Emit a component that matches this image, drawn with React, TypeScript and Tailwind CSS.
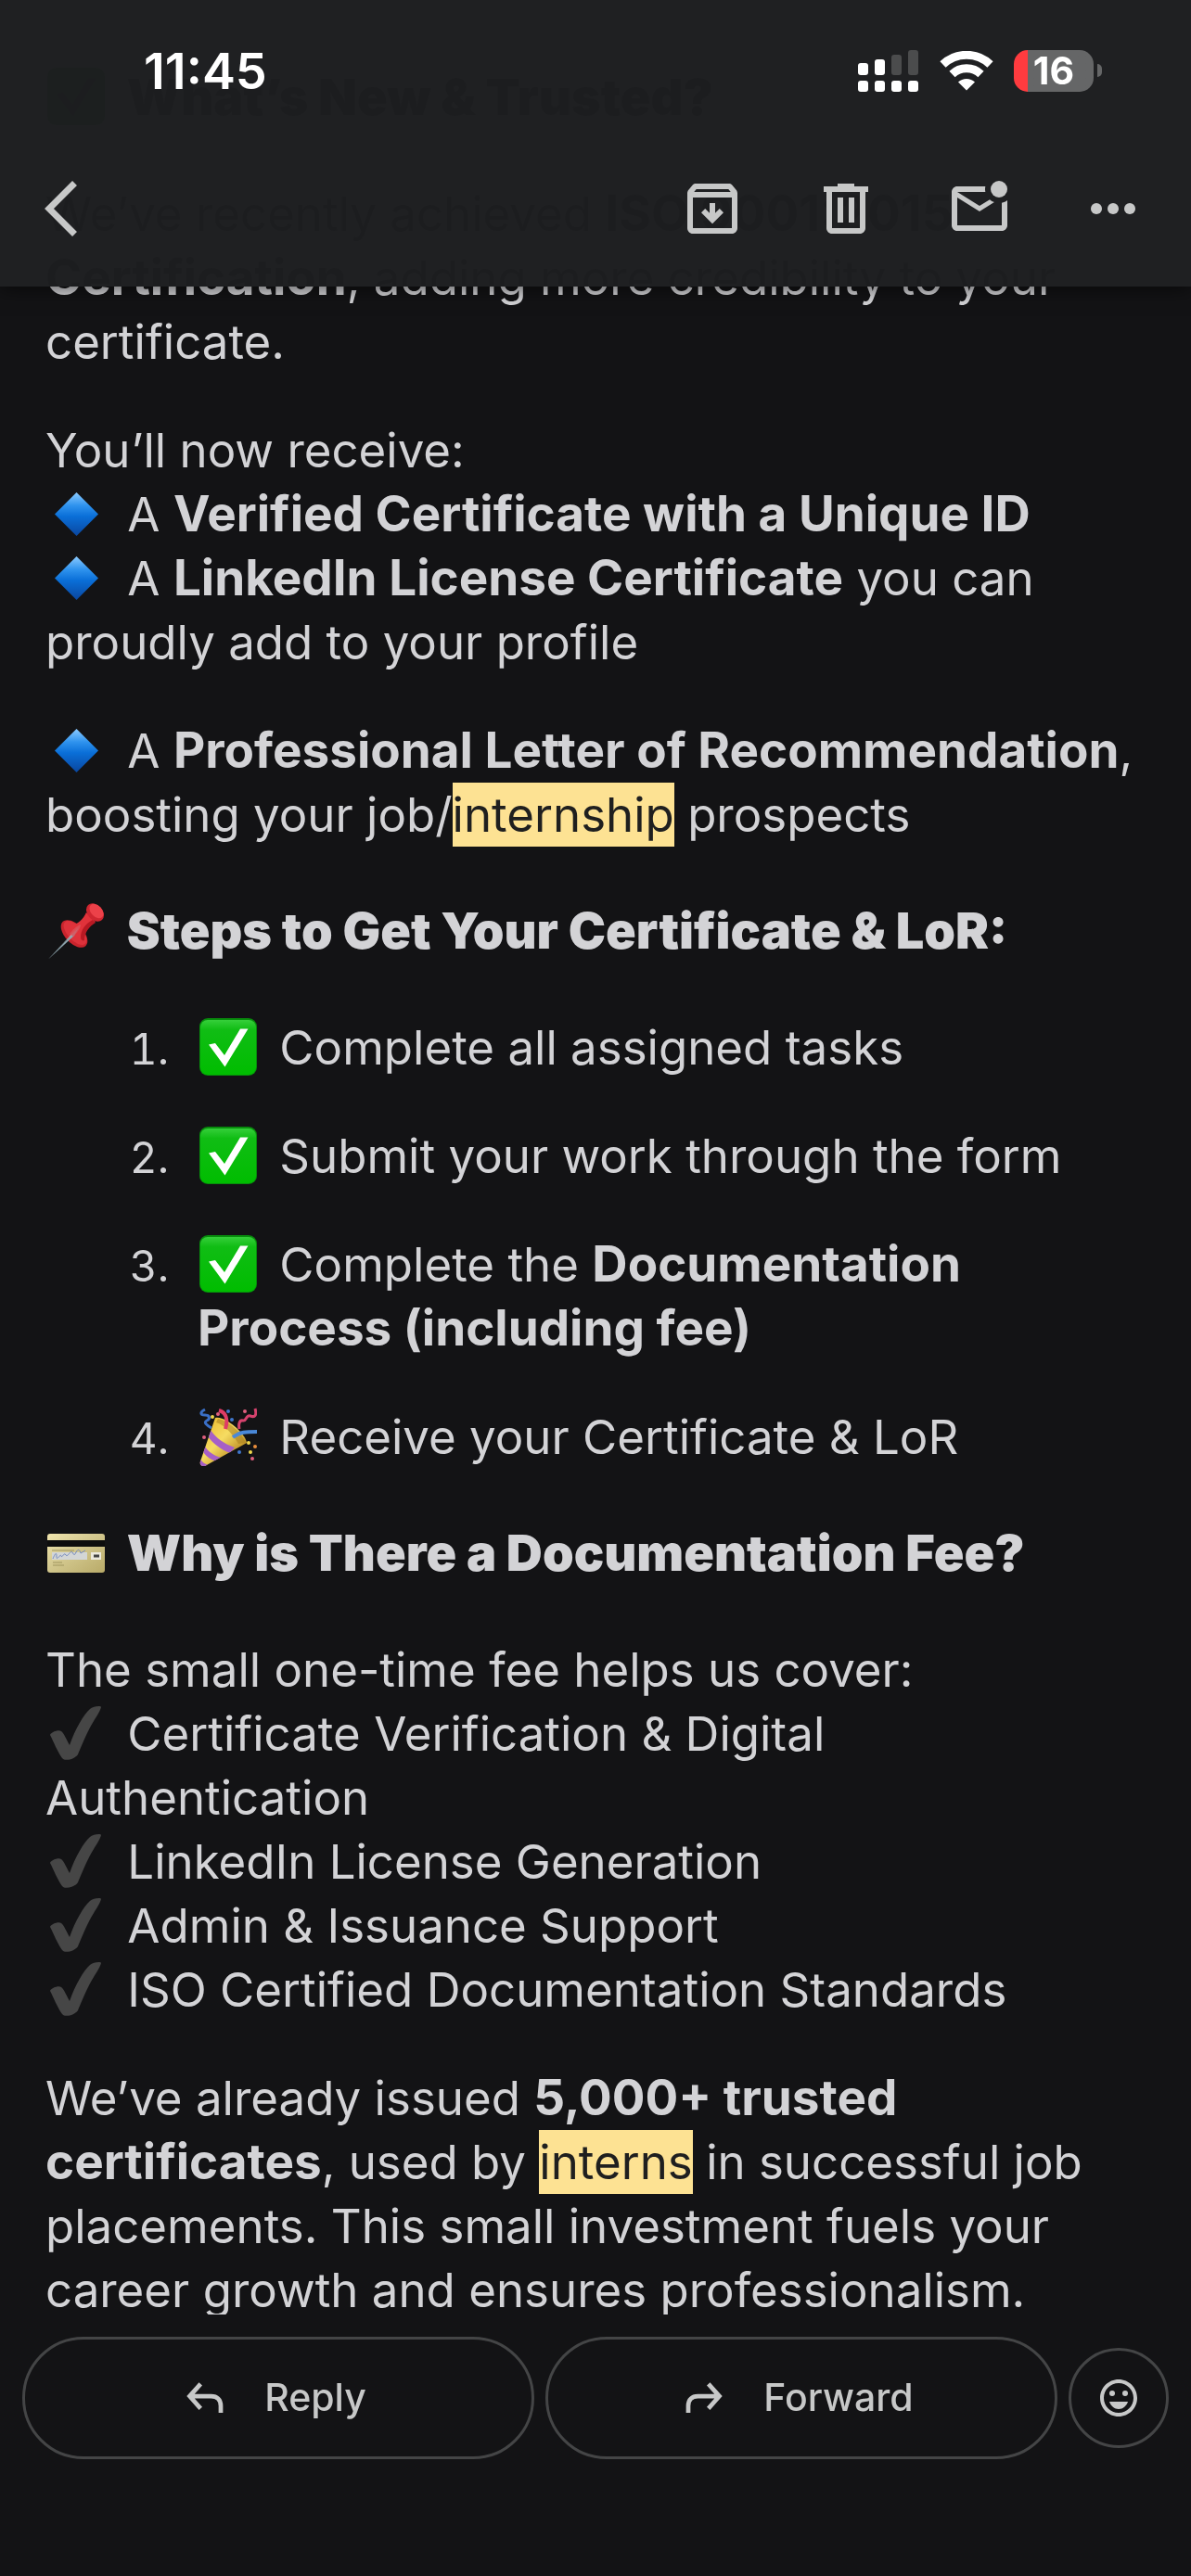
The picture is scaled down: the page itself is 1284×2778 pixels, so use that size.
import type { ReactNode } from "react";
import { MdOutlineEmojiEmotions } from "react-icons/md";

const emojiClass = "inline-block size-[64px] shrink-0 -mt-[10px] mr-[10px] align-middle";

function Diamond() {
  return (
    <svg viewBox="0 0 64 64" className={emojiClass} role="img" aria-label="Blue diamond">
      <defs>
        <linearGradient id="diamond" x1="0" y1="0" x2="0" y2="1">
          <stop offset="0" stopColor="#8ccbff" />
          <stop offset="0.3" stopColor="#2f93ee" />
          <stop offset="0.55" stopColor="#0a6fd8" />
          <stop offset="1" stopColor="#0a469f" />
        </linearGradient>
      </defs>
      <path d="M33.5 9 57 32.500 33.500 56 10 32.500Z" fill="url(#diamond)" />
    </svg>
  );
}

function CheckBox() {
  return (
    <svg viewBox="0 0 64 64" className={emojiClass} role="img" aria-label="Check mark">
      <defs>
        <linearGradient id="box" x1="0" y1="0" x2="0" y2="1">
          <stop offset="0" stopColor="#35cf3a" />
          <stop offset="0.18" stopColor="#10bd14" />
          <stop offset="1" stopColor="#00bd00" />
        </linearGradient>
      </defs>
      <rect x="2" y="1" width="62" height="62" rx="9" fill="#078d0c" />
      <rect x="3" y="3" width="60" height="59" rx="8" fill="url(#box)" />
      <path d="M12 29.500 19 28 29 41 46 12.500H54.500L29.500 53.500Z" fill="#fff" />
    </svg>
  );
}

function Pushpin() {
  return (
    <svg viewBox="0 0 64 64" className={emojiClass} role="img" aria-label="Pushpin">
      <ellipse cx="31" cy="36" rx="18" ry="10" transform="rotate(47 31 36)" fill="#c9242d" />
      <ellipse cx="32" cy="35" rx="16" ry="8" transform="rotate(47 32 35)" fill="#dd323b" />
      <path d="M27 27c8-1 14-7 17-14l10 10c-7 4-12 11-12 19-3 4-18-9-15-15Z" fill="#e0323a" />
      <path d="M38 40c0-8 5-15 13-19l3 3c-7 4-12 11-12 19-1 1-4 0-4-3Z" fill="#b81923" />
      <ellipse cx="53.500" cy="13" rx="11" ry="8" transform="rotate(47 53.500 13)" fill="#cf2630" />
      <ellipse cx="55" cy="11.500" rx="9" ry="6" transform="rotate(47 55 11.500)" fill="#ec4149" />
      <path d="M36 29 3 63.500 31 38Z" fill="#8fa9b3" />
      <path d="M35 29 3 63.500 29 36Z" fill="#d6dfe3" />
      <path d="M38 26c-4 1-9 6-12 10l4 3c4-4 8-9 8-13Z" fill="#d9525a" opacity="0.800" />
    </svg>
  );
}

function PartyPopper() {
  return (
    <svg viewBox="0 0 64 64" className={emojiClass} role="img" aria-label="Party popper">
      <defs>
        <linearGradient id="cone" x1="0.200" y1="0.300" x2="0.700" y2="0.800">
          <stop offset="0" stopColor="#eec23a" />
          <stop offset="0.450" stopColor="#f6dc62" />
          <stop offset="1" stopColor="#b98a20" />
        </linearGradient>
        <clipPath id="cone-shape">
          <path d="M19 12c10-3 33 17 34 27L8 64c-4 1-6-2-5-5Z" />
        </clipPath>
      </defs>
      <g clipPath="url(#cone-shape)">
        <rect width="64" height="64" fill="url(#cone)" />
        <path d="M22 13c11 2 25 14 30 26l-8 1C38 30 30 20 20 17Z" fill="#a9801f" opacity="0.550" />
        <path d="M14 25c5 8 14 15 26 19l-5 6C25 46 17 40 11 32Z" fill="#a65fc6" />
        <path d="M8 43c4 6 10 10 18 12l-6 4c-6-2-10-5-14-10Z" fill="#a65fc6" />
        <path d="M3 56c2 4 5 6 9 7l-5 4-7-5Z" fill="#a65fc6" />
      </g>
      <path d="M23 4c8 2 10 10 7 20" fill="none" stroke="#df3c66" strokeWidth="4" />
      <path d="M38 33c8-6 14-6 26-6" fill="none" stroke="#4a88d8" strokeWidth="4" />
      <path d="M8 3C2 6 3 9 8 9s6 4 2 6 0 5 5 8" fill="none" stroke="#3a6fc6" strokeWidth="3" />
      <path d="M62 2c2 7 0 10-5 8s-4 6-8 5-5 4-4 9" fill="none" stroke="#d5426d" strokeWidth="3" />
      <g fill="#f0d84c">
        <circle cx="16" cy="11" r="2" />
        <circle cx="55" cy="39" r="2" />
        <circle cx="57" cy="49" r="2" />
        <circle cx="62" cy="43" r="2" fill="#e88d3c" />
      </g>
      <g fill="#3f76cc">
        <circle cx="33" cy="5" r="2" />
        <circle cx="37" cy="14" r="2" />
        <circle cx="45" cy="49" r="2" />
      </g>
      <g fill="#e0607f">
        <circle cx="22" cy="8" r="2" />
        <circle cx="51" cy="5" r="2" />
        <circle cx="7" cy="33" r="2" />
        <circle cx="59" cy="56" r="2" />
      </g>
    </svg>
  );
}

function CreditCard() {
  return (
    <svg viewBox="0 0 64 64" className={emojiClass} role="img" aria-label="Credit card">
      <defs>
        <linearGradient id="card" x1="0" y1="0" x2="1" y2="1">
          <stop offset="0" stopColor="#f1e6ae" />
          <stop offset="0.4" stopColor="#d6cb92" />
          <stop offset="1" stopColor="#b8aa68" />
        </linearGradient>
      </defs>
      <rect x="2" y="12" width="62" height="42" rx="3" fill="url(#card)" />
      <rect x="2" y="19" width="62" height="7" fill="#0d0d0d" />
      <rect x="7" y="32" width="38" height="8" fill="#d3d6d6" />
      <path
        d="M8 39c3-7 4-7 4-2s4-4 5-1 3-5 5-1c2 3 5-6 7-3s2 4 4 0 4-3 5 1l5-3"
        fill="none"
        stroke="#7389bd"
        strokeWidth="1"
      />
      <rect x="49" y="32" width="11" height="8" fill="#ece9dc" />
      <path d="M52 36h6" stroke="#444" strokeWidth="3" />
      <path d="M7 30h24M8 43h10M8 46h12" stroke="#a0955f" strokeWidth="1" />
    </svg>
  );
}

function HeavyCheck() {
  return (
    <svg viewBox="0 0 64 64" className={emojiClass} role="img" aria-label="Check">
      <path
        d="M5 34c1-3 9-6 12-4 3 2 6 10 9 15C32 28 41 12 48 6c3-3 12-4 12-2-1 5-8 14-13 24-6 12-9 20-12 27-3 5-14 8-17 4C13 52 9 42 5 34Z"
        fill="#464646"
      />
    </svg>
  );
}

function Mark({ children }: { children: ReactNode }) {
  return <mark className="bg-[#fde293] py-[4px] text-[#1f1f1f]">{children}</mark>;
}

function Strong({ children }: { children: ReactNode }) {
  return <strong className="text-[53px] font-bold">{children}</strong>;
}

function Heading({ children }: { children: ReactNode }) {
  return <h2 className="my-[56px] text-[54px] leading-[70px] font-black [&>svg]:mr-[13px]">{children}</h2>;
}

function Step({ n, children }: { n: number; children: ReactNode }) {
  return (
    <li className="flex items-baseline">
      <span className="w-[133px] shrink-0 text-right text-[46px] leading-[60px] tabular-nums">{n}.</span>
      <div className="ml-[31px]">{children}</div>
    </li>
  );
}

function StatusBar() {
  return (
    <div className="flex h-[152px] items-center justify-between pr-[96px] pl-[155px] text-white">
      <time className="text-[54px] font-semibold">11:45</time>
      <div className="flex items-center gap-[22px]">
        <svg viewBox="0 0 66 45" className="h-[45px] w-[66px]" fill="#fff" aria-label="Signal">
          <rect x="0" y="14" width="11" height="13" rx="3" />
          <rect x="18" y="10" width="11" height="17" rx="3" />
          <rect x="36" y="5" width="11" height="22" rx="3" fill="#4b4c4d" />
          <rect x="54" y="0" width="11" height="27" rx="3" fill="#4b4c4d" />
          <rect x="0" y="33" width="11" height="12" rx="3" />
          <rect x="18" y="33" width="11" height="12" rx="3" />
          <rect x="36" y="33" width="11" height="12" rx="3" />
          <rect x="54" y="33" width="11" height="12" rx="3" />
        </svg>
        <svg viewBox="0 0 58 43" className="h-[43px] w-[58px]" fill="none" stroke="#fff" aria-label="Wi-Fi">
          <path d="M3.500 14.500a37 37 0 0 1 51 0" strokeWidth="9" />
          <path d="M13.500 25a22.500 22.500 0 0 1 31 0" strokeWidth="9" />
          <path d="M20 33.500a13 13 0 0 1 18 0L29 42.500Z" fill="#fff" stroke="none" />
        </svg>
        <div className="flex items-center gap-[4px]">
          <div className="flex h-[45px] w-[86px] items-center justify-center overflow-hidden rounded-[15px] bg-linear-to-r from-[#ff3b3f] from-18% to-[#656667] to-18% text-[41px] leading-[45px] font-bold">
            16
          </div>
          <div className="h-[14px] w-[5px] rounded-r-full bg-[#656667]" />
        </div>
      </div>
    </div>
  );
}

function Tool({ label, children }: { label: string; children: ReactNode }) {
  return (
    <button type="button" aria-label={label} className="size-[72px]">
      <svg viewBox="0 0 24 24" className="size-full" fill="currentColor">
        {children}
      </svg>
    </button>
  );
}

function TopBar() {
  return (
    <header className="fixed inset-x-0 top-0 z-10 h-[309px] bg-[#1c1d1f]/99 text-[#c7c8c8] shadow-[0_2px_20px_rgba(0,0,0,0.6)] backdrop-hue-rotate-180 backdrop-invert">
      <StatusBar />
      <div className="flex h-[146px] items-center justify-between px-[48px]">
        <button type="button" aria-label="Back" className="flex size-[72px] items-center">
          <svg viewBox="0 0 36 60" className="h-[60px] w-[36px]" fill="none" stroke="currentColor" strokeWidth="7">
            <path d="M32.500 2.500 5 30l27.500 27.500" />
          </svg>
        </button>
        <div className="flex gap-[72px]">
          <Tool label="Archive">
            <path d="M20.540 5.230l-1.390-1.680C18.880 3.210 18.470 3 18 3H6c-.47 0-.88.21-1.160.55L3.460 5.230C3.170 5.570 3 6.020 3 6.500V19c0 1.100.9 2 2 2h14c1.100 0 2-.9 2-2V6.500c0-.48-.17-.93-.46-1.270zM6.240 5h11.520l.83 1H5.420l.82-1zM5 19V8h14v11H5z" />
            <path d="m12 17.400 4-4-1.400-1.400-1.600 1.600V10h-2v3.600L9.400 12 8 13.400Z" />
          </Tool>
          <Tool label="Delete">
            <path
              fillRule="evenodd"
              d="M7 21c-1.100 0-2-.9-2-2V6H4V4h5V3h6v1h5v2h-1v13c0 1.100-.9 2-2 2ZM17 6H7v13h10ZM9 17h2V8H9Zm4 0h2V8h-2Z"
            />
          </Tool>
          <Tool label="Mark as unread">
            <path d="M22 8.980V18c0 1.100-.9 2-2 2H4c-1.100 0-2-.9-2-2V6c0-1.100.9-2 2-2h10.100c-.06.32-.1.66-.1 1 0 .34.04.68.1 1H4l8 5 3.670-2.290c.47.43 1.020.76 1.630.98L12 13 4 8v10h16V9.900c.74-.15 1.420-.48 2-.92z" />
            <circle cx="19" cy="5" r="3" />
          </Tool>
          <Tool label="More options">
            <circle cx="6" cy="12" r="2" />
            <circle cx="12" cy="12" r="2" />
            <circle cx="18" cy="12" r="2" />
          </Tool>
        </div>
      </div>
    </header>
  );
}

function Message() {
  return (
    <main className="min-h-0 flex-1 overflow-hidden pt-[14px] pr-[48px] pl-[49px] text-[51px] leading-[69px] text-[#d3d3d6]">
      <Heading>
        <CheckBox /> What’s New &amp; Trusted?
      </Heading>
      <p>
        We’ve recently achieved <Strong>ISO 9001:2015</Strong>
        <br />
        <Strong>Certification</Strong>, adding more credibility to your certificate.
      </p>
      <p className="mt-[48px]">
        You’ll now receive:
        <br />
        <Diamond /> A <Strong>Verified Certificate with a Unique ID</Strong>
        <br />
        <Diamond /> A <Strong>LinkedIn License Certificate</Strong> you can
        <br />
        proudly add to your profile
      </p>
      <p className="mt-[48px]">
        <Diamond /> A <Strong>Professional Letter of Recommendation</Strong>,
        <br />
        boosting your job/<Mark>internship</Mark> prospects
      </p>
      <Heading>
        <Pushpin /> Steps to Get Your Certificate &amp; LoR:
      </Heading>
      <ol className="flex flex-col gap-[48px]">
        <Step n={1}>
          <CheckBox /> Complete all assigned tasks
        </Step>
        <Step n={2}>
          <CheckBox /> Submit your work through the form
        </Step>
        <Step n={3}>
          <CheckBox /> Complete the <Strong>Documentation Process (including fee)</Strong>
        </Step>
        <Step n={4}>
          <PartyPopper /> Receive your Certificate &amp; LoR
        </Step>
      </ol>
      <Heading>
        <CreditCard /> Why is There a Documentation Fee?
      </Heading>
      <p>
        The small one-time fee helps us cover:
        <br />
        <HeavyCheck /> Certificate Verification &amp; Digital
        <br />
        Authentication
        <br />
        <HeavyCheck /> LinkedIn License Generation
        <br />
        <HeavyCheck /> Admin &amp; Issuance Support
        <br />
        <HeavyCheck /> ISO Certified Documentation Standards
      </p>
      <p className="mt-[48px]">
        We’ve already issued <Strong>5,000+ trusted certificates</Strong>, used by <Mark>interns</Mark> in successful job
        placements. This small investment fuels your career growth and ensures professionalism.
      </p>
    </main>
  );
}

function Actions() {
  const pill =
    "flex h-[132px] flex-1 items-center justify-center gap-[44px] rounded-full border-3 border-[#444546] pr-[4px] text-[41px] font-medium";
  return (
    <footer className="flex items-center gap-[12px] px-[24px] pt-[24px] pb-[126px] text-[#c7c8c8]">
      <button type="button" className={pill}>
        <svg viewBox="0 0 42 36" className="h-[34px] w-[40px]" fill="none" stroke="currentColor" strokeWidth="5">
          <path d="M16 2 3.500 16 16 30M4 16h24c7 0 11 4 11 11v8" />
        </svg>
        Reply
      </button>
      <button type="button" className={pill}>
        <svg viewBox="0 0 42 36" className="h-[34px] w-[40px]" fill="none" stroke="currentColor" strokeWidth="5">
          <path d="M26 2l12.500 14L26 30M38 16H14C7 16 3 20 3 27v8" />
        </svg>
        Forward
      </button>
      <button
        type="button"
        aria-label="Add reaction"
        className="flex size-[108px] items-center justify-center rounded-full border-3 border-[#444546]"
      >
        <MdOutlineEmojiEmotions className="size-[48px]" />
      </button>
    </footer>
  );
}

export default function App() {
  return (
    <div className="flex h-screen flex-col bg-[#131315] font-['Inter',sans-serif]">
      <TopBar />
      <Message />
      <Actions />
    </div>
  );
}
